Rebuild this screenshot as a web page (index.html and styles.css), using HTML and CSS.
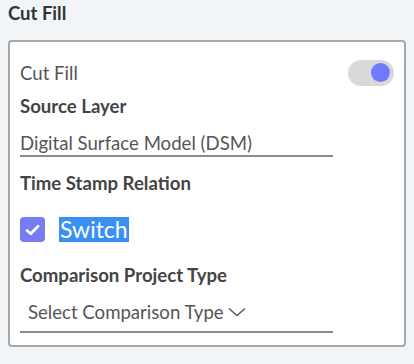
FILE: index.html
```html
<!DOCTYPE html>
<html lang="en">
<head>
    <meta charset="UTF-8">
    <meta name="viewport" content="width=device-width, initial-scale=1.0">
    <title>Cut Fill</title>
    <link rel="stylesheet" href="styles.css">
</head>
<body>

    <h3 class="panel-title">Cut Fill</h3>

    <div class="card">
        <div class="row">
            <span class="label-plain">Cut Fill</span>
            <span class="toggle"><span class="knob"></span></span>
        </div>

        <div class="label-bold source">Source Layer</div>
        <div class="field">Digital Surface Model (DSM)</div>

        <div class="label-bold stamp">Time Stamp Relation</div>

        <div class="check-row">
            <span class="checkbox">
                <svg width="15" height="12" viewBox="0 0 15 12">
                    <path d="M2 6.5 L5.8 9.8 L13 2.3" fill="none" stroke="#fff" stroke-width="2.8" stroke-linecap="round" stroke-linejoin="round"/>
                </svg>
            </span>
            <span class="selected">Switch</span>
        </div>

        <div class="label-bold compare">Comparison Project Type</div>
        <div class="field select">
            Select Comparison Type
            <svg width="18" height="10" viewBox="0 0 18 10">
                <path d="M1 1.5 L9 8.5 L17 1.5" fill="none" stroke="#555" stroke-width="1.4"/>
            </svg>
        </div>
    </div>

</body>
</html>
```

FILE: styles.css
```css
body {
    font-family: Lato, "Open Sans", sans-serif;
    margin: 0;
    padding: 0 8px;
    background-color: #f2f5f7;
    color: #444;
}

.panel-title {
    font-size: 18.5px;
    font-weight: bold;
    color: #333;
    margin: 0;
    padding-top: 2px;
    height: 38px;
    line-height: 22px;
}

.card {
    background-color: white;
    border: 2px solid #a8a8a8;
    border-radius: 4px;
    width: 398px;
    height: 307px;
    box-sizing: border-box;
    padding: 18px 10px 0 10px;
}

.row {
    display: flex;
    justify-content: space-between;
    align-items: center;
    height: 25px;
}

.label-plain {
    font-size: 18.6px;
    line-height: 22px;
    color: #555;
}

.toggle {
    width: 46px;
    height: 26px;
    border-radius: 13px;
    background-color: #d9d9d9;
    display: flex;
    align-items: center;
    justify-content: flex-end;
    padding-right: 4px;
    box-sizing: border-box;
}

.knob {
    width: 19px;
    height: 19px;
    border-radius: 50%;
    background-color: #6e7bff;
}

.label-bold {
    font-size: 18.6px;
    font-weight: bold;
    color: #444;
    line-height: 22px;
}

.source {
    margin-top: 10px;
}

.field {
    width: 313px;
    box-sizing: border-box;
    font-size: 18.6px;
    color: #555;
    line-height: 22px;
    padding-top: 15px;
    padding-bottom: 1px;
    border-bottom: 2px solid #8c8c8c;
}

.stamp {
    margin-top: 15px;
}

.check-row {
    display: flex;
    align-items: center;
    margin-top: 23px;
    height: 25px;
}

.checkbox {
    width: 25px;
    height: 25px;
    border-radius: 4px;
    background-color: #777cf6;
    display: flex;
    align-items: center;
    justify-content: center;
}

.selected {
    margin-left: 14px;
    background-color: #3a8ff5;
    color: white;
    font-size: 23px;
    line-height: 25px;
    padding: 0 1px;
}

.compare {
    margin-top: 22px;
}

.select {
    padding-left: 8px;
    padding-top: 15px;
    padding-bottom: 8px;
    display: flex;
    align-items: center;
    gap: 4px;
}
```
